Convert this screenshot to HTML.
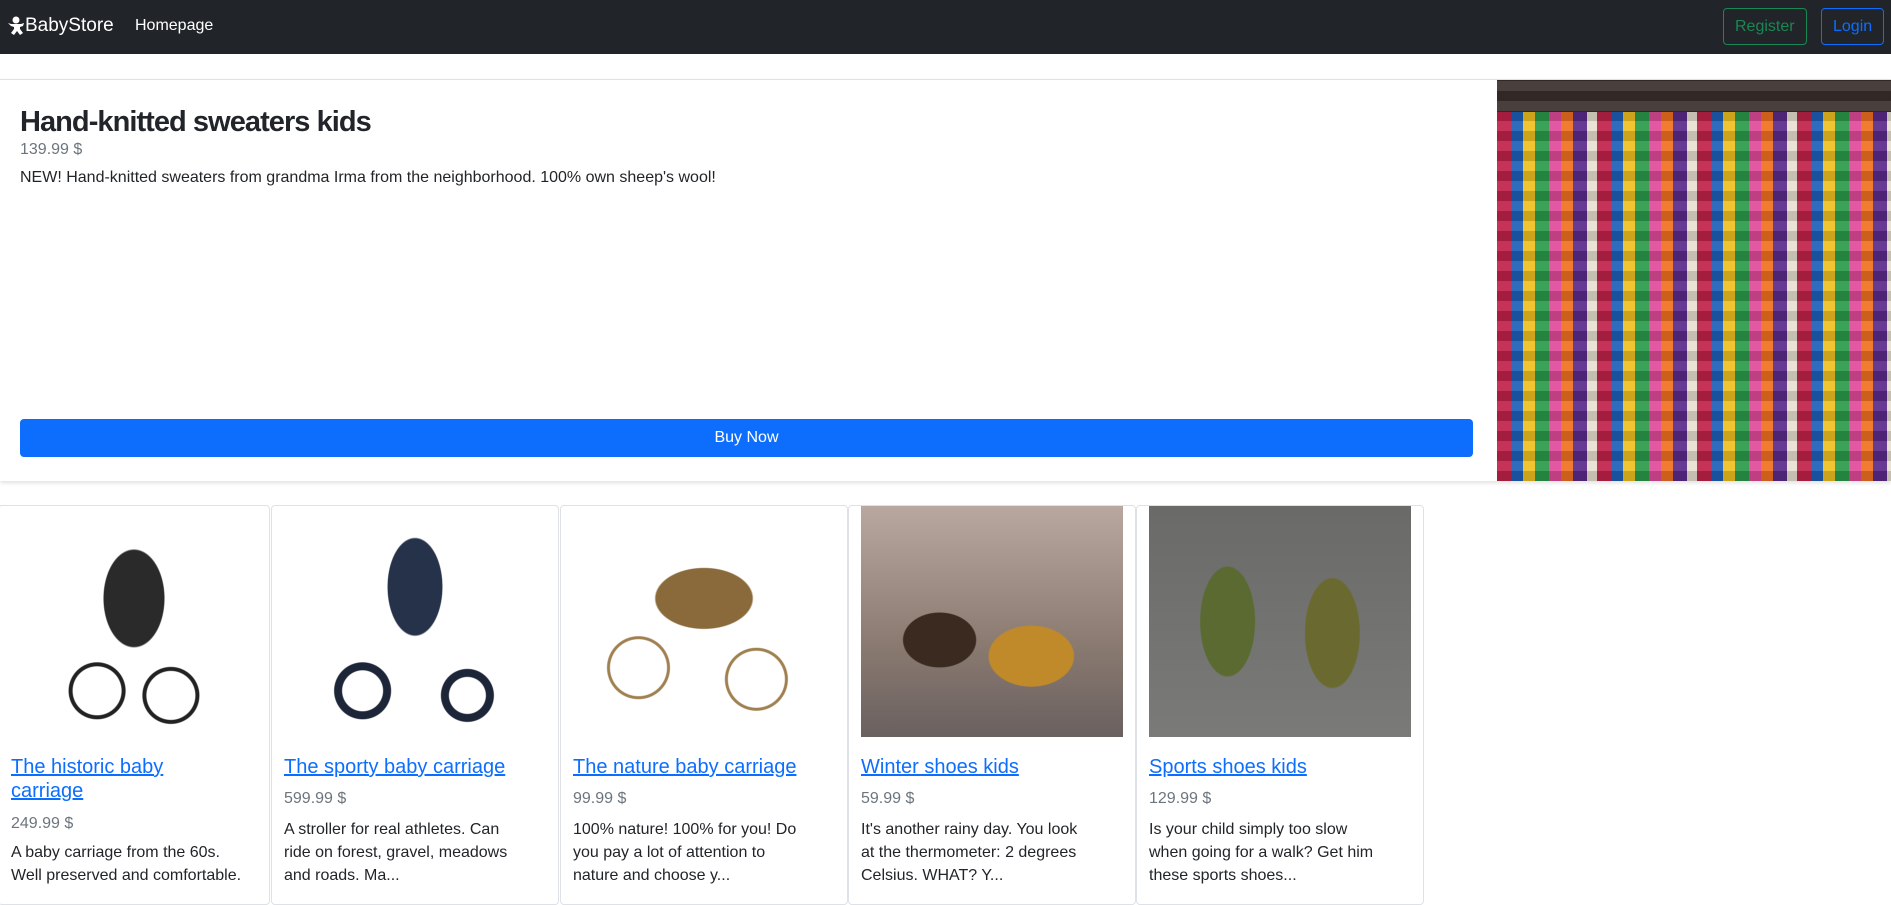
<!DOCTYPE html>
<html><head><meta charset="utf-8"><style>
*{box-sizing:border-box}
body{margin:0;width:1891px;height:886px;overflow:hidden;font-family:"Segoe UI","Liberation Sans",sans-serif;font-size:16px;color:#212529;background:#fff}
nav{height:54px;background:#212529;position:relative}
.brand{position:absolute;left:7px;top:15px;color:#fff;font-size:19px;display:flex;align-items:center}
.home{position:absolute;left:135px;top:17px;color:#fff;font-size:16px}
.btn{position:absolute;top:8px;height:37px;border:1px solid;border-radius:4px;font-size:16px;line-height:35px;padding:0 11px}
.reg{left:1723px;color:#198754;border-color:#198754}
.log{left:1821px;color:#0d6efd;border-color:#0d6efd}
.feat{position:absolute;top:79px;left:0;width:1891px;height:402px;border-top:1px solid #dee2e6;box-shadow:0 2px 4px rgba(0,0,0,.12)}
.feat h3{position:absolute;left:20px;top:26px;margin:0;font-size:29px;font-weight:600;letter-spacing:-0.95px}
.feat .p{position:absolute;left:20px;top:61px;color:#6c757d}
.feat .d{position:absolute;left:20px;top:89px}
.buy{position:absolute;left:20px;top:339px;width:1453px;height:38px;background:#0d6efd;color:#fff;border-radius:4px;text-align:center;line-height:38px}
.fimg{position:absolute;left:1497px;top:0;width:394px;height:401px;background:
linear-gradient(180deg,#3a2f2c 0 8%,transparent 8%),
repeating-linear-gradient(90deg,#c0224a 0 14px,#1e5fb8 14px 26px,#f0c020 26px 38px,#2a9a4a 38px 52px,#e04a9a 52px 64px,#f07020 64px 76px,#5a2a8a 76px 90px,#e8e0d0 90px 100px);}
.fimg:after{content:"";position:absolute;inset:0;background:repeating-linear-gradient(0deg,rgba(0,0,0,.15) 0 10px,rgba(255,255,255,.08) 10px 20px)}
.card{position:absolute;top:505px;height:400px;border:1px solid #dee2e6;border-radius:4px}
.card .im{position:absolute;left:12px;top:0;right:12px;height:231px}
.card a{position:absolute;left:12px;top:249px;right:12px;color:#0d6efd;text-decoration:underline;font-size:20px;line-height:24px;white-space:nowrap}
.card .pr{position:absolute;left:12px;color:#6c757d}
.card .ds{position:absolute;left:12px;right:0;line-height:23px;white-space:nowrap}
</style></head><body>
<nav><div class="brand"><svg width="18" height="20" viewBox="0 0 18 20"><circle cx="9" cy="4" r="3.5" fill="#fff"/><path d="M1 7l3 1h10l3-1-1 3-3 1v2l3 4-3 2-3-4-3 4-3-2 3-4v-2l-3-1z" fill="#fff"/></svg>BabyStore</div><div class="home">Homepage</div>
<div class="btn reg">Register</div><div class="btn log">Login</div></nav>
<div class="feat"><h3>Hand-knitted sweaters kids</h3><div class="p">139.99 $</div><div class="d">NEW! Hand-knitted sweaters from grandma Irma from the neighborhood. 100% own sheep's wool!</div><div class="buy">Buy Now</div><div class="fimg"></div></div>

<div class="card" style="left:-2px;width:272px"><div class="im" style="background:radial-gradient(ellipse 50px 80px at 50% 40%,#2a2a2a 60%,transparent 62%),radial-gradient(circle 30px at 35% 80%,transparent 24px,#222 25px,#222 28px,transparent 29px),radial-gradient(circle 30px at 65% 82%,transparent 24px,#222 25px,#222 28px,transparent 29px)"></div><a>The historic baby<br>carriage</a><div class="pr" style="top:309px">249.99 $</div><div class="ds" style="top:335px">A baby carriage from the 60s.<br>Well preserved and comfortable.</div></div>
<div class="card" style="left:271px;width:288px"><div class="im" style="background:radial-gradient(ellipse 45px 80px at 50% 35%,#26324a 60%,transparent 62%),radial-gradient(circle 30px at 30% 80%,transparent 20px,#1d2638 21px,#1d2638 28px,transparent 29px),radial-gradient(circle 28px at 70% 82%,transparent 18px,#1d2638 19px,#1d2638 26px,transparent 27px)"></div><a>The sporty baby carriage</a><div class="pr" style="top:284px">599.99 $</div><div class="ds" style="top:312px">A stroller for real athletes. Can<br>ride on forest, gravel, meadows<br>and roads. Ma...</div></div>
<div class="card" style="left:560px;width:288px"><div class="im" style="background:radial-gradient(ellipse 80px 50px at 50% 40%,#8a6a3a 60%,transparent 62%),radial-gradient(circle 34px at 25% 70%,transparent 28px,#a08050 29px,#a08050 31px,transparent 32px),radial-gradient(circle 34px at 70% 75%,transparent 28px,#a08050 29px,#a08050 31px,transparent 32px)"></div><a>The nature baby carriage</a><div class="pr" style="top:284px">99.99 $</div><div class="ds" style="top:312px">100% nature! 100% for you! Do<br>you pay a lot of attention to<br>nature and choose y...</div></div>
<div class="card" style="left:848px;width:288px"><div class="im" style="background:radial-gradient(ellipse 70px 50px at 65% 65%,#c08a2a 60%,transparent 62%),radial-gradient(ellipse 60px 45px at 30% 58%,#3a2a20 60%,transparent 62%),linear-gradient(180deg,#b8a8a0,#8a7a70 60%,#6a6060)"></div><a>Winter shoes kids</a><div class="pr" style="top:284px">59.99 $</div><div class="ds" style="top:312px">It's another rainy day. You look<br>at the thermometer: 2 degrees<br>Celsius. WHAT? Y...</div></div>
<div class="card" style="left:1136px;width:288px"><div class="im" style="background:radial-gradient(ellipse 45px 90px at 30% 50%,#5a6a30 60%,transparent 62%),radial-gradient(ellipse 45px 90px at 70% 55%,#6a6a30 60%,transparent 62%),linear-gradient(180deg,#6a6a68,#7a7a78)"></div><a>Sports shoes kids</a><div class="pr" style="top:284px">129.99 $</div><div class="ds" style="top:312px">Is your child simply too slow<br>when going for a walk? Get him<br>these sports shoes...</div></div>
</body></html>
